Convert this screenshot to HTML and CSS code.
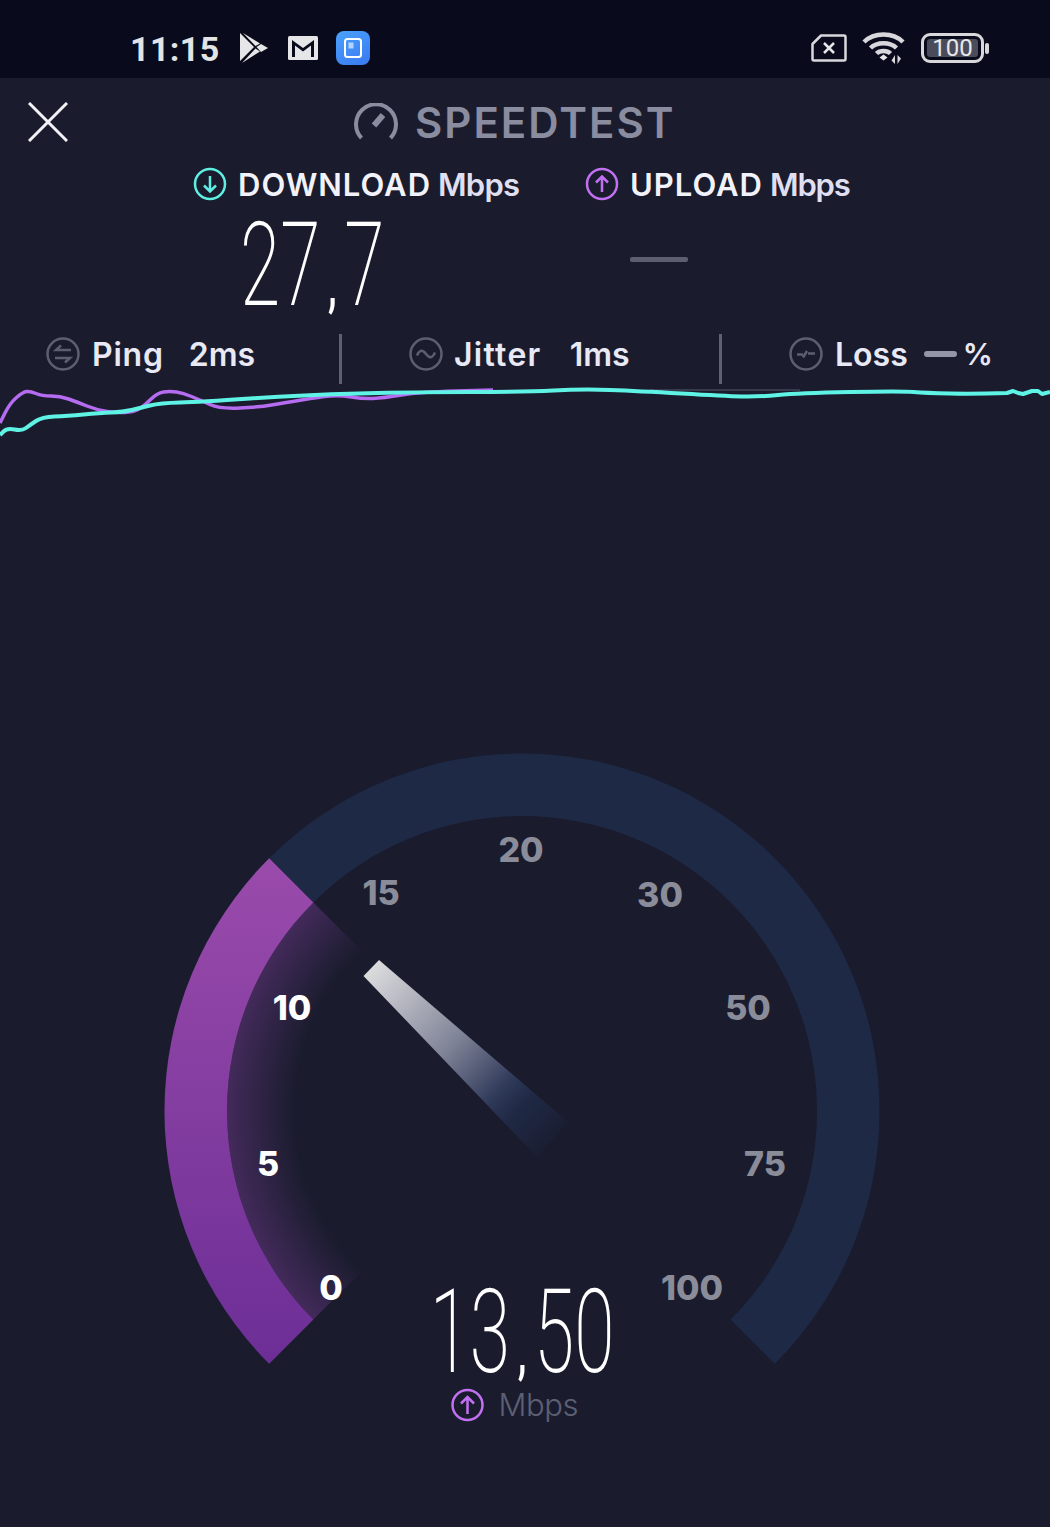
FILE: index.html
```html
<!DOCTYPE html>
<html>
	<head>
		<title>Speedtest</title>
		<link rel="stylesheet" href="styles.css">
	</head>
	<body>
		<div class="statusbar">
			<span class="clock">11:15</span>
			<svg class="ico-play" width="28" height="30" viewBox="0 0 28 30">
				<path d="M0 0 L14 14 L0 28 Z M3 0 L20 10.500 L15.500 13 Z M16.500 14 L21 11 L28 15 L21 19 Z M15.500 15.500 L20 18.500 L2 30 Z" fill="#e6e6e8"/>
			</svg>
			<svg class="ico-mail" width="30" height="24" viewBox="0 0 30 24">
				<rect width="30" height="24" rx="1.500" fill="#e6e6e8"/>
				<path d="M4 4 L15 12 L26 4 V21 H23 V9.500 L15 15.500 L7 9.500 V21 H4 Z" fill="#090b1c"/>
			</svg>
			<svg class="ico-app" width="34" height="34" viewBox="0 0 34 34">
				<defs>
					<linearGradient id="appfill" x1="0" y1="0" x2="0.600" y2="1">
						<stop offset="0" stop-color="#4ba2fd"/>
						<stop offset="1" stop-color="#3b7ff2"/>
					</linearGradient>
				</defs>
				<rect width="34" height="34" rx="8" fill="url(#appfill)"/>
				<rect x="9" y="8" width="16" height="18" rx="2.500" fill="none" stroke="#fff" stroke-width="2"/>
				<rect x="12.500" y="11.500" width="5" height="6" fill="#b5d4fb"/>
			</svg>
			<svg class="ico-sim" width="36" height="28" viewBox="0 0 36 28">
				<path d="M10 1.500 H33 Q34.500 1.500 34.500 3 V25 Q34.500 26.500 33 26.500 H3 Q1.500 26.500 1.500 25 V10 Z" fill="none" stroke="#d8d8dc" stroke-width="2.500" stroke-linejoin="round"/>
				<path d="M13 9 L23 19 M23 9 L13 19" stroke="#e6e6e8" stroke-width="2.500"/>
			</svg>
			<svg class="ico-wifi" width="44" height="34" viewBox="0 0 44 34">
				<path d="M2 11 C12 1 31 1 41 11 M8.500 17 C15 10.500 28 10.500 34.500 17 M14.500 22.500 C18 19 25 19 28.500 22.500" fill="none" stroke="#d8d8dc" stroke-width="4.500"/>
				<path d="M17.500 26.500 L21.500 23.500 L25.500 26.500 L21.500 29.500 Z" fill="#e6e6e8"/>
				<path d="M33 24 V33 L29.500 29.500 Z M35.500 33 V24 L39 27.500 Z" fill="#d8d8dc"/>
			</svg>
			<div class="battery">
				<div class="battery-body"><span class="battery-level">100</span></div>
				<div class="battery-tip"></div>
			</div>
		</div>

		<header class="topbar">
			<svg class="ico-close" width="40" height="40" viewBox="0 0 40 40">
				<path d="M1 1 L39 39 M39 1 L1 39" stroke="#f2f2f6" stroke-width="3"/>
			</svg>
			<svg class="ico-logo" width="44" height="38" viewBox="0 0 44 38">
				<path d="M7.500 35 A20 20 0 1 1 36.500 35" fill="none" stroke="#8a8c9f" stroke-width="4"/>
				<path d="M20 22.500 L29 12" fill="none" stroke="#8a8c9f" stroke-width="6"/>
			</svg>
			<h1 class="title">SPEEDTEST</h1>
		</header>

		<div class="rates">
			<div class="rate rate-down">
				<svg width="34" height="34" viewBox="0 0 34 34">
					<circle cx="17" cy="17" r="15" fill="none" stroke="#5feee2" stroke-width="2.500"/>
					<path d="M17 9 V24 M11 18.500 L17 24.500 L23 18.500" fill="none" stroke="#5feee2" stroke-width="2.500"/>
				</svg>
				<span class="rate-word">DOWNLOAD</span><span class="rate-unit">Mbps</span>
			</div>
			<div class="rate rate-up">
				<svg width="34" height="34" viewBox="0 0 34 34">
					<circle cx="17" cy="17" r="15" fill="none" stroke="#c270f2" stroke-width="2.500"/>
					<path d="M17 25 V10 M11 15.500 L17 9.500 L23 15.500" fill="none" stroke="#c270f2" stroke-width="2.500"/>
				</svg>
				<span class="rate-word">UPLOAD</span><span class="rate-unit">Mbps</span>
			</div>
		</div>

		<div class="readings">
			<div class="reading-down"><span class="thin-number">27<span class="comma">,</span>7</span></div>
			<div class="reading-up"></div>
		</div>

		<div class="stats">
			<div class="stat stat-ping">
				<svg width="34" height="34" viewBox="0 0 34 34">
					<circle cx="17" cy="17" r="15.500" fill="none" stroke="#5d5f71" stroke-width="2.500"/>
					<path d="M25 13 H10 L15 8.500 M9 21 H24 L19 25.500" fill="none" stroke="#5d5f71" stroke-width="2.500"/>
				</svg>
				<span class="stat-name">Ping</span>
				<span class="stat-value">2ms</span>
			</div>
			<div class="stat stat-jitter">
				<svg width="34" height="34" viewBox="0 0 34 34">
					<circle cx="17" cy="17" r="15.500" fill="none" stroke="#5d5f71" stroke-width="2.500"/>
					<path d="M8 18.500 C11 12 14 13 17 17 C20 21 23 22 26 15.500" fill="none" stroke="#5d5f71" stroke-width="2.500"/>
				</svg>
				<span class="stat-name">Jitter</span>
				<span class="stat-value">1ms</span>
			</div>
			<div class="stat stat-loss">
				<svg width="34" height="34" viewBox="0 0 34 34">
					<circle cx="17" cy="17" r="15.500" fill="none" stroke="#5d5f71" stroke-width="2.500"/>
					<path d="M8 17.500 H14 M14 20.500 L18 14 M19 16.500 H26" fill="none" stroke="#5d5f71" stroke-width="2.500"/>
				</svg>
				<span class="stat-name">Loss</span>
				<span class="loss-dash"></span>
				<span class="loss-pct">%</span>
			</div>
		</div>

		<svg class="chart" width="1050" height="356" viewBox="0 384 1050 356">
			<path d="M650 390 H800" stroke="#55576a" stroke-width="1"/>
			<path class="line-up" d="M0 423 L5 413 Q10 403 16.500 397.500 Q23 392 26.500 391.500 Q30 391 36 393.500 Q42 396 51 396 Q60 396 68.500 399 Q77 402 87 406 Q97 410 107 411.500 Q117 413 125 412.500 Q133 412 138 409.500 Q143 407 150 400 Q157 393 163.500 392 Q170 391 176.500 392 Q183 393 191.500 396.500 Q200 400 210 404.500 Q220 409 240 408 Q260 407 271.500 405 Q283 403 301.500 400 Q320 397 330 396 Q340 395 351.500 397 Q363 399 373 398.500 Q383 398 401.500 395 Q420 392 456 391 L493 390"/>
			<path class="line-down" d="M0 435 L3.500 431.500 Q7 428 14.500 429.500 Q22 431 26 428 Q30 425 36 421 Q42 417 54.500 416.500 Q67 416 83.500 414.500 Q100 413 111.500 412.500 Q123 412 131.500 410 Q140 408 150 405.500 Q160 403 180 402.500 Q200 402 250 398.500 Q300 395 358.500 393.500 Q417 392 471 392 Q525 392 553.500 390.500 Q582 389 610 390 Q638 391 681.500 393.500 Q725 396 741.500 396.500 Q758 397 778 395 Q798 393 850 392 Q902 391 913.500 392 Q925 393 950 393.500 Q975 394 1007 393 L1013 391 L1018 393 L1023 394 L1032 391 L1038 391 L1042 394 L1050 392"/>
		</svg>

		<svg class="gauge" width="1050" height="787" viewBox="0 740 1050 787">
			<defs>
				<linearGradient id="arcfill" gradientUnits="userSpaceOnUse" x1="0" y1="857" x2="0" y2="1364">
					<stop offset="0" stop-color="#9a4bab"/>
					<stop offset="1" stop-color="#6c2e96"/>
				</linearGradient>
				<radialGradient id="glow" gradientUnits="userSpaceOnUse" cx="522" cy="1111" r="295">
					<stop offset="0.770" stop-color="#8f44ad" stop-opacity="0"/>
					<stop offset="1" stop-color="#8f44ad" stop-opacity="0.350"/>
				</radialGradient>
				<linearGradient id="needlefill" gradientUnits="userSpaceOnUse" x1="371" y1="968" x2="552" y2="1140">
					<stop offset="0" stop-color="#dcdcde"/>
					<stop offset="0.450" stop-color="#7e8296"/>
					<stop offset="0.720" stop-color="#2e3858"/>
					<stop offset="0.820" stop-color="#1f2944"/>
					<stop offset="1" stop-color="#1b1e33"/>
				</linearGradient>
			</defs>

			<path d="M269.200 858.200 A357.500 357.500 0 1 1 774.800 1363.800 L730.600 1319.600 A295 295 0 1 0 313.400 902.400 Z" fill="#1e2945"/>
			<path d="M313.400 902.400 L522 1111 L313.400 1319.600 A295 295 0 0 1 313.400 902.400 Z" fill="url(#glow)"/>
			<path d="M269.200 1363.800 A357.500 357.500 0 0 1 269.200 858.200 L313.400 902.400 A295 295 0 0 0 313.400 1319.600 Z" fill="url(#arcfill)"/>
			<path d="M363.500 976 L379 960 L568 1122 L537 1157 Z" fill="url(#needlefill)"/>

			<g class="ticks">
				<text class="tick-on" x="331" y="1300">0</text>
				<text class="tick-on" x="268" y="1176">5</text>
				<text class="tick-on" x="292" y="1020">10</text>
				<text x="381" y="905">15</text>
				<text x="521" y="862">20</text>
				<text x="660" y="907">30</text>
				<text x="748" y="1020">50</text>
				<text x="765" y="1176">75</text>
				<text x="692" y="1300">100</text>
			</g>

			<text class="speed" transform="translate(522 1372) scale(0.63 1)" x="0" y="0">13<tspan class="comma" dx="12">,</tspan><tspan dx="12">50</tspan></text>

			<circle cx="467.500" cy="1405" r="15" fill="none" stroke="#c270f2" stroke-width="2.500"/>
			<path d="M467.500 1414 V1397 M461 1403.500 L467.500 1397 L474 1403.500" fill="none" stroke="#c270f2" stroke-width="2.500"/>
			<text class="speed-unit" x="498.500" y="1416">Mbps</text>
		</svg>
	</body>
</html>
```

FILE: styles.css
```css
html, body {
	margin: 0;
	padding: 0;
}
body {
	width: 1050px;
	height: 1527px;
	overflow: hidden;
	background-color: #1a1c2e;
	font-family: "Inter", "Liberation Sans", sans-serif;
	color: #e9e9f5;
}
svg {
	display: block;
	flex: none;
}

/* status bar */
.statusbar {
	height: 78px;
	background-color: #090b1c;
	display: flex;
	align-items: center;
	padding: 18px 0 0 130px;
	box-sizing: border-box;
}
.clock {
	font-family: "Roboto", sans-serif;
	font-size: 34px;
	font-weight: 700;
	letter-spacing: 0.4px;
	color: #e4e4e6;
	width: 110px;
	margin-top: 2px;
}
.ico-mail {
	margin-left: 20px;
}
.ico-app {
	margin-left: 18px;
	margin-top: -1px;
}
.ico-sim {
	margin-left: 441px;
}
.ico-wifi {
	margin-left: 15px;
}
.battery {
	display: flex;
	align-items: center;
	margin-left: 15px;
}
.battery-body {
	width: 63px;
	height: 30px;
	box-sizing: border-box;
	border: 3px solid #d8d8dc;
	border-radius: 9px;
	padding: 3px;
	display: flex;
}
.battery-level {
	flex: 1;
	background-color: #4b4c5b;
	border-radius: 3px;
	color: #e8e8ea;
	font-family: "Roboto", sans-serif;
	font-size: 24px;
	line-height: 18px;
	text-align: center;
}
.battery-tip {
	width: 4px;
	height: 11px;
	margin-left: 1px;
	background-color: #d8d8dc;
	border-radius: 2px;
}

/* header */
.topbar {
	display: flex;
	align-items: center;
	height: 88px;
	padding-left: 28px;
}
.ico-logo {
	margin-left: 286px;
}
.title {
	margin: 0 0 0 17px;
	font-size: 42px;
	font-weight: 600;
	letter-spacing: 2px;
	color: #8a8c9f;
}

/* download / upload */
.rates {
	display: flex;
	padding-left: 193px;
	height: 36px;
}
.rate {
	display: flex;
	align-items: center;
	font-size: 31px;
	font-weight: 600;
}
.rate-down {
	width: 392px;
}
.rate-word {
	margin-left: 11px;
	letter-spacing: 1px;
	color: #f2f2fa;
}
.rate-unit {
	margin-left: 7px;
	letter-spacing: -0.8px;
	color: #dfdff0;
}
.rate-up .rate-unit {
	letter-spacing: -1.2px;
}
.readings {
	display: flex;
	height: 132px;
}
.reading-down {
	width: 525px;
	padding: 3px 0 0 240px;
	box-sizing: border-box;
}
.thin-number {
	display: block;
	font-family: "Roboto", sans-serif;
	font-weight: 200;
	font-size: 116px;
	line-height: 120px;
	color: #fff;
	transform: scaleX(0.63);
	transform-origin: left top;
}
.thin-number .comma {
	font-size: 62px;
	font-weight: 500;
	margin: 0 12px;
}
.reading-up {
	width: 58px;
	height: 5px;
	margin: 55px 0 0 105px;
	background-color: #5d5f71;
	border-radius: 2px;
}

/* ping, jitter, loss */
.stats {
	display: flex;
	height: 50px;
}
.stat {
	display: flex;
	align-items: center;
	box-sizing: border-box;
	padding-bottom: 10px;
	font-size: 32px;
	font-weight: 600;
}
.stat-ping {
	width: 339px;
	padding-left: 46px;
}
.stat-jitter {
	width: 380px;
	padding-left: 67px;
	border-left: 3px solid #5e6073;
}
.stat-loss {
	width: 331px;
	padding-left: 67px;
	border-left: 3px solid #5e6073;
}
.stat-name {
	margin-left: 12px;
	letter-spacing: 0.8px;
}
.stat-jitter .stat-name {
	margin-left: 11px;
	letter-spacing: 1.3px;
}
.stat-loss .stat-name {
	letter-spacing: 0;
}
.stat-value {
	margin-left: 25px;
}
.stat-jitter .stat-value {
	margin-left: 28px;
}
.loss-dash {
	width: 33px;
	height: 6px;
	margin-left: 16px;
	background-color: #9496a8;
	border-radius: 3px;
}
.loss-pct {
	margin-left: 6px;
	font-size: 30px;
}

/* graph */
.line-up, .line-down {
	fill: none;
	stroke-width: 3.5px;
	stroke-linejoin: round;
}
.line-up {
	stroke: #b56cf0;
}
.line-down {
	stroke: #5ff3e6;
	stroke-width: 4px;
}

/* gauge */
.ticks text {
	font-family: "Inter", "Liberation Sans", sans-serif;
	font-size: 34px;
	font-weight: 800;
	fill: #8b8c99;
	text-anchor: middle;
}
.ticks .tick-on {
	fill: #fff;
}
.speed {
	font-family: "Roboto", sans-serif;
	font-weight: 200;
	font-size: 116px;
	fill: #fff;
	text-anchor: middle;
}
.speed .comma {
	font-size: 62px;
	font-weight: 500;
}
.speed-unit {
	font-family: "Inter", "Liberation Sans", sans-serif;
	font-weight: 300;
	font-size: 31px;
	letter-spacing: -0.4px;
	fill: #5d6075;
}
```
